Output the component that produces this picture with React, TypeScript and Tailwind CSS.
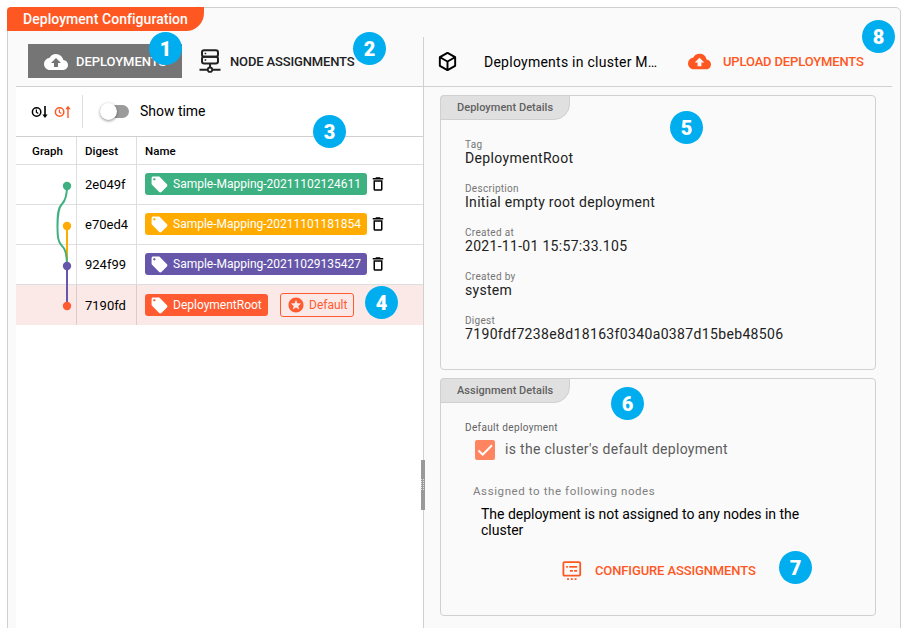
import React from "react";
import { MdCloudUpload, MdDeleteOutline, MdLocalOffer, MdStars } from "react-icons/md";

const rows = [
  { digest: "2e049f", name: "Sample-Mapping-20211102124611", color: "bg-[#3eb182]" },
  { digest: "e70ed4", name: "Sample-Mapping-20211101181854", color: "bg-[#ffab00]" },
  { digest: "924f99", name: "Sample-Mapping-20211029135427", color: "bg-[#6757aa]" },
];

const details = [
  { label: "Tag", value: "DeploymentRoot", track: "tracking-[0.35px]" },
  { label: "Description", value: "Initial empty root deployment", track: "tracking-[0.3px]" },
  { label: "Created at", value: "2021-11-01 15:57:33.105", track: "tracking-[0.3px]" },
  { label: "Created by", value: "system", track: "tracking-[0.3px]" },
  { label: "Digest", value: "7190fdf7238e8d18163f0340a0387d15beb48506", track: "tracking-[0.35px]" },
];

function Marker({ n, place }: { n: number; place: string }) {
  return (
    <div
      className={
        "absolute flex size-[33px] items-center justify-center rounded-full bg-[#00aeef] text-[20px] leading-none font-black text-white " +
        place
      }
    >
      {n}
    </div>
  );
}

function ClockIcon({ up }: { up?: boolean }) {
  return (
    <svg width="17" height="14" viewBox="0 0 17 14" fill="none" stroke="currentColor" className="block shrink-0">
      <circle cx="5.6" cy="7" r="4.2" strokeWidth="1.5" />
      <path d="M5.4 4.6V7.2L7.3 8.5" strokeWidth="1.2" />
      {up ? (
        <>
          <path d="M14 13V2" strokeWidth="1.4" />
          <path d="M11.400 4.200L14 0.800L16.600 4.200Z" fill="currentColor" stroke="none" />
        </>
      ) : (
        <>
          <path d="M14 1V11" strokeWidth="1.6" />
          <path d="M11.400 9.600L14 13L16.600 9.600Z" fill="currentColor" stroke="none" />
        </>
      )}
    </svg>
  );
}

function NodeIcon() {
  return (
    <svg width="22" height="24" viewBox="0 0 22 24" fill="none" stroke="currentColor" strokeWidth="2" className="block">
      <rect x="3" y="1.200" width="16" height="6.600" rx="2.200" />
      <rect x="3" y="7.800" width="16" height="6.600" rx="2.200" />
      <path d="M11 14.400V18.200M0.500 20.700H8.500M13.500 20.700H21.500" />
      <circle cx="11" cy="20.700" r="2.200" strokeWidth="1.800" />
      <path d="M5.600 4.500H7.200M5.600 11.100H7.200" strokeWidth="1.500" />
    </svg>
  );
}

function CubeIcon() {
  return (
    <svg width="23" height="23" viewBox="0 0 24 24" fill="currentColor" className="block">
      <path d="M21,16.5C21,16.88 20.79,17.21 20.47,17.38L12.57,21.82C12.41,21.94 12.21,22 12,22C11.79,22 11.59,21.94 11.43,21.82L3.53,17.38C3.21,17.21 3,16.88 3,16.5V7.5C3,7.12 3.21,6.79 3.53,6.62L11.43,2.18C11.59,2.06 11.79,2 12,2C12.21,2 12.41,2.06 12.57,2.18L20.47,6.62C20.79,6.79 21,7.12 21,7.5V16.5M12,4.15L6.04,7.5L12,10.85L17.96,7.5L12,4.15M5,15.91L11,19.29V12.58L5,9.21V15.91M19,15.91V9.21L13,12.58V19.29L19,15.91Z" />
    </svg>
  );
}

function ConfigureIcon() {
  return (
    <svg width="20" height="20" viewBox="0 0 20 20" fill="currentColor" className="block">
      <rect x="1.400" y="1.200" width="16.800" height="13.400" rx="1" fill="none" stroke="currentColor" strokeWidth="1.800" />
      <rect x="4.200" y="5" width="1.700" height="1.700" />
      <rect x="7.200" y="5" width="8" height="1.700" />
      <rect x="7.900" y="9" width="3" height="1.700" />
      <rect x="12.100" y="9" width="3" height="1.700" />
      <rect x="5.100" y="17.200" width="1.800" height="1.800" />
      <rect x="8.900" y="17.200" width="1.800" height="1.800" />
      <rect x="12.700" y="17.200" width="1.800" height="1.800" />
    </svg>
  );
}

function Card({ title, height, children }: { title: string; height: string; children: React.ReactNode }) {
  return (
    <section className={"w-[436px] rounded border border-[#d0d0d0] " + height}>
      <h2 className="-mt-px -ml-px flex h-[25px] w-[130px] items-center rounded-tl rounded-br-[16px] border border-[#d0d0d0] bg-[#e0e0e0] pt-px pl-4 text-[11px] font-medium tracking-[0.03px] whitespace-nowrap text-[#616161]">
        {title}
      </h2>
      {children}
    </section>
  );
}

export default function App() {
  return (
    <div className="relative h-[628px] w-[911px] overflow-hidden bg-white pt-[7px] pl-[7px] font-[Roboto,sans-serif] text-[#212121]">
      <div className="h-[640px] w-[894px] rounded-[5px] border border-[#d0d0d0] bg-[#fafafa]">
        <h1 className="-mt-px -ml-px flex h-6 w-[197px] items-center rounded-tl rounded-br-[18px] bg-[#ff5722] pl-4 text-[14px] font-medium tracking-[0.05px] whitespace-nowrap text-white">
          Deployment Configuration
        </h1>
        <div className="mt-[6px] ml-2 flex h-[600px] w-[876px]">
          <div className="flex w-[408px] flex-col border-r border-[#d0d0d0]">
            <div className="flex h-[50px] shrink-0 border-b border-[#d0d0d0] pt-[7px] pl-3">
              <button className="flex h-9 w-[154px] items-center border-b-2 border-white bg-[#757575] pl-4 text-[13px] font-medium tracking-[-0.05px] whitespace-nowrap text-white">
                <MdCloudUpload className="mt-px size-6" />
                <span className="mt-px ml-2">DEPLOYMENTS</span>
              </button>
              <button className="ml-[17px] flex h-[34px] items-center text-[13px] font-medium tracking-[-0.15px] whitespace-nowrap">
                <NodeIcon />
                <span className="mt-px ml-[9px]">NODE ASSIGNMENTS</span>
              </button>
            </div>
            <div className="flex grow flex-col bg-white">
              <div className="flex h-[50px] items-center border-b border-[#d0d0d0] pl-[15px]">
                <span className="text-black"><ClockIcon /></span>
                <span className="ml-[6px] text-[#ff5722]"><ClockIcon up /></span>
                <div className="ml-[11px] h-[33px] w-px bg-[#dedede]" />
                <div className="ml-[17px] flex w-[29px] items-center">
                  <div className="z-10 size-[17px] shrink-0 rounded-full bg-white shadow-[0_1px_3px_rgba(0,0,0,0.45)]" />
                  <div className="-ml-[9px] h-[13px] w-[21px] shrink-0 rounded-r-full bg-[#9b9b9b]" />
                </div>
                <span className="ml-[11px] text-[14px] tracking-[-0.02px] text-black">Show time</span>
              </div>
              <div className="relative">
                <div className="flex h-7 border-b border-[#dedede] text-[11.5px] leading-[28px] font-medium tracking-[0.05px] text-black">
                  <div className="w-[61px] border-r border-[#dedede] pl-4">Graph</div>
                  <div className="w-[60px] border-r border-[#dedede] pl-2">Digest</div>
                  <div className="pl-2">Name</div>
                </div>
                {rows.map((r) => (
                  <div key={r.digest} className="flex h-10 border-b border-[#dedede]">
                    <div className="w-[61px] border-r border-[#dedede]" />
                    <div className="w-[60px] border-r border-[#dedede] pl-2 text-[13px] leading-[39px] text-black">{r.digest}</div>
                    <div className="flex items-start pt-2 pl-2">
                      <div className={"flex h-[22px] w-[222px] items-center rounded-[3px] pl-[5px] text-[12px] whitespace-nowrap text-white " + r.color}>
                        <MdLocalOffer className="size-[19px] shrink-0" />
                        <span className="ml-1">{r.name}</span>
                      </div>
                      <MdDeleteOutline className="mt-[2px] ml-[2px] size-[18px] text-black" />
                    </div>
                  </div>
                ))}
                <div className="flex h-10 bg-[#fbe9e7]">
                  <div className="w-[61px] border-r border-[#dccbc9]" />
                  <div className="w-[60px] border-r border-[#dccbc9] pl-2 text-[13px] leading-[41px] text-black">7190fd</div>
                  <div className="flex items-center pl-2">
                    <div className="flex h-[22px] w-[123px] items-center rounded-[3px] bg-[#ff5a30] pl-[5px] text-[12px] text-white">
                      <MdLocalOffer className="size-[19px] shrink-0" />
                      <span className="ml-1">DeploymentRoot</span>
                    </div>
                    <div className="ml-3 flex h-6 w-[74px] items-center rounded-[3px] border border-[#ff5a30] pl-[6px] text-[12px] text-[#ff5a30]">
                      <MdStars className="size-[18px] shrink-0" />
                      <span className="ml-1">Default</span>
                    </div>
                  </div>
                </div>
                <svg className="absolute top-7 left-0" width="61" height="160" fill="none" strokeWidth="2">
                  <path d="M51 61V101" stroke="#ffab00" />
                  <path d="M51 101V141" stroke="#6757aa" />
                  <path d="M51 21C51 31 49 36 46 39C42 43 41.500 50 41.500 61C41.500 72 42 77 46 81C50 84 51 91 51 101" stroke="#3eb182" />
                  <circle cx="51" cy="21" r="4.200" fill="#3eb182" />
                  <circle cx="51" cy="61" r="4.200" fill="#ffab00" />
                  <circle cx="51" cy="101" r="4.200" fill="#6757aa" />
                  <circle cx="51" cy="141" r="4.200" fill="#ff5a30" />
                </svg>
              </div>
            </div>
          </div>

          <div className="w-[468px]">
            <div className="flex h-[50px] items-center border-b border-[#d0d0d0] pl-3">
              <span className="text-black"><CubeIcon /></span>
              <span className="mt-px ml-[25px] w-[180px] text-[14px] tracking-[0.25px] whitespace-nowrap text-black">Deployments in cluster M…</span>
              <button className="ml-[24px] flex items-center text-[13px] font-medium tracking-[-0.15px] whitespace-nowrap text-[#ff5722]">
                <MdCloudUpload className="size-[23px]" />
                <span className="ml-3">UPLOAD DEPLOYMENTS</span>
              </button>
            </div>
            <div className="flex flex-col gap-2 pt-2 pl-4">
              <Card title="Deployment Details" height="h-[275px]">
                <dl className="mt-[18px] ml-6">
                  {details.map((d) => (
                    <div key={d.label} className="h-11">
                      <dt className="text-[10px] leading-[13px] tracking-[0.3px] text-[#757575]">{d.label}</dt>
                      <dd className={"text-[14px] leading-[15px] " + d.track}>{d.value}</dd>
                    </div>
                  ))}
                </dl>
              </Card>
              <Card title="Assignment Details" height="h-[238px]">
                <div className="flex flex-col pt-[18px] pl-6">
                  <span className="text-[10px] leading-[13px] tracking-[0.35px] text-[#616161]">Default deployment</span>
                  <label className="mt-[6px] ml-[10px] flex h-5 items-center">
                    <span className="flex size-5 items-center justify-center rounded-[2px] bg-[#ff8560]">
                      <svg width="20" height="20" viewBox="0 0 20 20" fill="none" stroke="white" strokeWidth="2">
                        <path d="M3.500 10.500L7.700 14.700L17 5.200" />
                      </svg>
                    </span>
                    <span className="-mt-[2px] ml-[10px] text-[14px] tracking-[0.3px] text-[#5c5c5c]">is the cluster's default deployment</span>
                  </label>
                  <span className="mt-[25px] ml-2 text-[11.5px] leading-[13px] tracking-[0.6px] text-[#808080]">Assigned to the following nodes</span>
                  <p className="mt-[8px] ml-4 text-[14px] leading-4 tracking-[-0.01px] whitespace-nowrap text-black">
                    The deployment is not assigned to any nodes in the
                    <br />
                    cluster
                  </p>
                  <button className="mt-[23px] ml-[97px] flex h-5 items-center text-[13px] font-medium tracking-[-0.12px] whitespace-nowrap text-[#ff5722]">
                    <ConfigureIcon />
                    <span className="ml-[13px]">CONFIGURE ASSIGNMENTS</span>
                  </button>
                </div>
              </Card>
            </div>
          </div>
        </div>
      </div>

      <div className="absolute top-[460px] left-[421px] flex h-[50px] w-1 items-center justify-center bg-[#999]">
        <svg width="4" height="12" fill="#e0e0e0">
          {[0, 2, 4, 6, 8, 10].map((y) => (
            <g key={y}>
              <rect x="0" y={y} width="1" height="1" />
              <rect x="2" y={y} width="1" height="1" />
            </g>
          ))}
        </svg>
      </div>

      <Marker n={1} place="left-[149px] top-[32px]" />
      <Marker n={2} place="left-[353px] top-[32px]" />
      <Marker n={3} place="left-[313px] top-[115px]" />
      <Marker n={4} place="left-[365px] top-[286px]" />
      <Marker n={5} place="left-[670px] top-[111px]" />
      <Marker n={6} place="left-[611px] top-[387px]" />
      <Marker n={7} place="left-[779px] top-[551px]" />
      <Marker n={8} place="left-[862px] top-[20px]" />
    </div>
  );
}
